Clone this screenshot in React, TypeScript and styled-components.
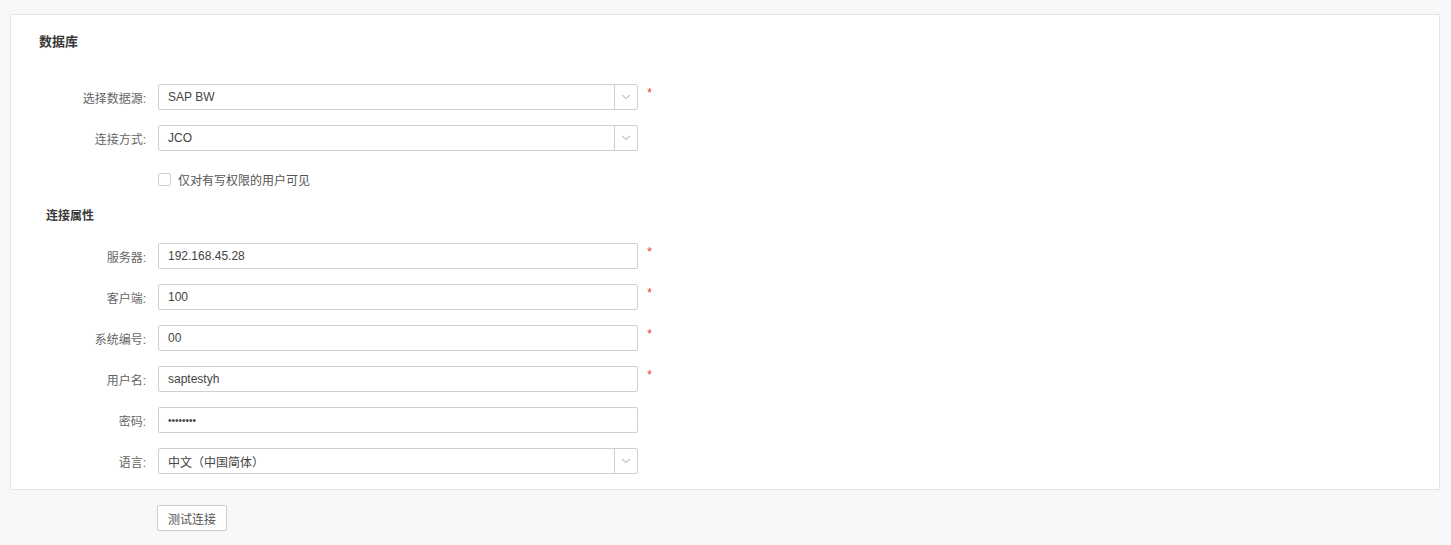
import React from "react";
import styled, { createGlobalStyle } from "styled-components";

const Global = createGlobalStyle`
  html, body { margin: 0; padding: 0; background: #f7f8fa; }
  body { font-family: "Liberation Sans", "Noto Sans CJK SC", sans-serif; font-size: 12px; color: #333; }
  * { box-sizing: border-box; }
`;

const Page = styled.div`
  padding: 14px 11px 14px 10px;
`;

const Panel = styled.section`
  background: #fff;
  border: 1px solid #e3e4e6;
  padding: 17px 0 0 0;
`;

const Title = styled.h2`
  margin: 0 0 32px 28px;
  font-size: 13px;
  line-height: 20px;
  font-weight: 600;
  color: #3a3a3a;
`;

const SectionTitle = styled.h3`
  margin: 0 0 18px 35px;
  font-size: 12px;
  line-height: 18px;
  font-weight: 600;
  color: #3a3a3a;
`;

const Row = styled.div`
  display: flex;
  align-items: center;
  height: 26px;
  margin-bottom: 15px;
`;

const Label = styled.label`
  width: 137px;
  padding-right: 2px;
  text-align: right;
  color: #666;
  font-size: 12px;
  flex: none;
`;

const Control = styled.div`
  margin-left: 10px;
  width: 480px;
  height: 26px;
  border: 1px solid #cfcfcf;
  border-radius: 2px;
  display: flex;
  align-items: center;
  background: #fff;
  flex: none;
`;

const Value = styled.span`
  flex: 1;
  padding-left: 9px;
  color: #444;
  font-size: 12px;
`;

const Dots = styled(Value)`
  font-size: 10px;
`;

const Arrow = styled.span`
  width: 23px;
  height: 100%;
  border-left: 1px solid #cfcfcf;
  display: flex;
  align-items: center;
  justify-content: center;
`;

const Required = styled.span`
  align-self: flex-start;
  margin-left: 9px;
  margin-top: 2px;
  color: #e84b4b;
  font-size: 13px;
  line-height: 14px;
`;

const CheckWrap = styled.div`
  margin-left: 147px;
  display: flex;
  align-items: center;
  gap: 7px;
  color: #555;
`;

const Box = styled.span`
  width: 13px;
  height: 13px;
  border: 1px solid #cfcfcf;
  border-radius: 2px;
  background: #fff;
`;

const Footer = styled.div`
  padding: 15px 0 0 147px;
`;

const Button = styled.button`
  width: 70px;
  height: 26px;
  border: 1px solid #cfcfcf;
  border-radius: 2px;
  background: #fff;
  color: #555;
  font-family: inherit;
  font-size: 12px;
  padding: 0;
`;

const Chevron = () => (
  <svg width="10" height="6" viewBox="0 0 10 6">
    <path d="M1 1 L5 4.5 L9 1" fill="none" stroke="#c8c8c8" strokeWidth="1.2" />
  </svg>
);

type F = { label: string; value: string; select?: boolean; required?: boolean; password?: boolean };

const Field = ({ label, value, select, required, password }: F) => (
  <Row>
    <Label>{label}:</Label>
    <Control>
      {password ? <Dots>{value}</Dots> : <Value>{value}</Value>}
      {select && (
        <Arrow>
          <Chevron />
        </Arrow>
      )}
    </Control>
    {required && <Required>*</Required>}
  </Row>
);

export default function App() {
  return (
    <>
      <Global />
      <Page>
        <Panel>
          <Title>数据库</Title>
          <Field label="选择数据源" value="SAP BW" select required />
          <Field label="连接方式" value="JCO" select />
          <Row>
            <CheckWrap>
              <Box />
              <span>仅对有写权限的用户可见</span>
            </CheckWrap>
          </Row>
          <SectionTitle>连接属性</SectionTitle>
          <Field label="服务器" value="192.168.45.28" required />
          <Field label="客户端" value="100" required />
          <Field label="系统编号" value="00" required />
          <Field label="用户名" value="saptestyh" required />
          <Field label="密码" value="••••••••" password />
          <Field label="语言" value="中文（中国简体）" select />
        </Panel>
        <Footer>
          <Button>测试连接</Button>
        </Footer>
      </Page>
    </>
  );
}
